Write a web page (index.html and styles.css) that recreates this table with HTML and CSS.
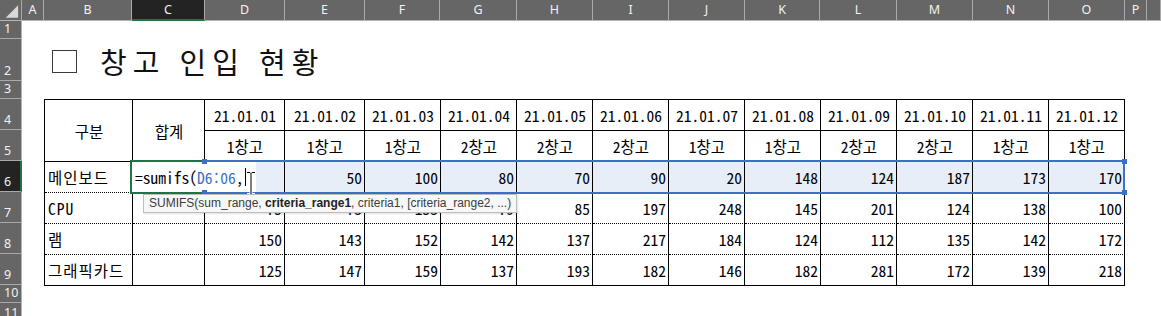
FILE: index.html
```html
<!DOCTYPE html>
<html lang="ko">
<head>
<meta charset="utf-8">
<link rel="stylesheet" href="styles.css">
</head>
<body>
<div class="sheet">
  <div class="colhead">
    <div class="corner"><svg width="22" height="20" viewBox="0 0 22 20"><polygon points="19,5 19,18 6,18" fill="#d8d8d8"/></svg></div>
    <div>A</div><div>B</div><div class="sel">C</div><div>D</div><div>E</div><div>F</div><div>G</div><div>H</div><div>I</div><div>J</div><div>K</div><div>L</div><div>M</div><div>N</div><div>O</div><div>P</div><div></div>
  </div>
  <div class="body">
    <div class="rowhead">
      <div class="rh h18">1</div>
      <div class="rh h42">2</div>
      <div class="rh h18">3</div>
      <div class="rh h31">4</div>
      <div class="rh h31">5</div>
      <div class="rh h31 sel">6</div>
      <div class="rh h31">7</div>
      <div class="rh h31">8</div>
      <div class="rh h31">9</div>
      <div class="rh h18">10</div>
      <div class="rh rest">11</div>
    </div>
    <div class="content">
      <div class="title"><span class="box"></span><span class="title-text">창고 인입 현황</span></div>
      <div class="table">
        <div class="c ctr span2">구분</div>
        <div class="c ctr span2">합계</div>
        <div class="c ctr">21.01.01</div><div class="c ctr">21.01.02</div><div class="c ctr">21.01.03</div><div class="c ctr">21.01.04</div><div class="c ctr">21.01.05</div><div class="c ctr">21.01.06</div><div class="c ctr">21.01.07</div><div class="c ctr">21.01.08</div><div class="c ctr">21.01.09</div><div class="c ctr">21.01.10</div><div class="c ctr">21.01.11</div><div class="c ctr">21.01.12</div>
        <div class="c ctr">1창고</div><div class="c ctr">1창고</div><div class="c ctr">1창고</div><div class="c ctr">2창고</div><div class="c ctr">2창고</div><div class="c ctr">2창고</div><div class="c ctr">1창고</div><div class="c ctr">1창고</div><div class="c ctr">2창고</div><div class="c ctr">2창고</div><div class="c ctr">1창고</div><div class="c ctr">1창고</div>

        <div class="c lbl dot">메인보드</div><div class="c dot"></div>
        <div class="c num dot hl"></div><div class="c num dot hl">50</div><div class="c num dot hl">100</div><div class="c num dot hl">80</div><div class="c num dot hl">70</div><div class="c num dot hl">90</div><div class="c num dot hl">20</div><div class="c num dot hl">148</div><div class="c num dot hl">124</div><div class="c num dot hl">187</div><div class="c num dot hl">173</div><div class="c num dot hl">170</div>

        <div class="c lbl dot">CPU</div><div class="c dot"></div>
        <div class="c num dot">75</div><div class="c num dot">73</div><div class="c num dot">153</div><div class="c num dot">79</div><div class="c num dot">85</div><div class="c num dot">197</div><div class="c num dot">248</div><div class="c num dot">145</div><div class="c num dot">201</div><div class="c num dot">124</div><div class="c num dot">138</div><div class="c num dot">100</div>

        <div class="c lbl dot">램</div><div class="c dot"></div>
        <div class="c num dot">150</div><div class="c num dot">143</div><div class="c num dot">152</div><div class="c num dot">142</div><div class="c num dot">137</div><div class="c num dot">217</div><div class="c num dot">184</div><div class="c num dot">124</div><div class="c num dot">112</div><div class="c num dot">135</div><div class="c num dot">142</div><div class="c num dot">172</div>

        <div class="c lbl">그래픽카드</div><div class="c"></div>
        <div class="c num">125</div><div class="c num">147</div><div class="c num">159</div><div class="c num">137</div><div class="c num">193</div><div class="c num">182</div><div class="c num">146</div><div class="c num">182</div><div class="c num">281</div><div class="c num">172</div><div class="c num">139</div><div class="c num">218</div>

        <div class="range"></div>
        <div class="active"></div>
        <div class="editor">=sumifs(<span class="ref">D6:06</span>,<span class="caret"></span></div>
        <span class="handle h-tl"></span><span class="handle h-bl"></span><span class="handle h-tr"></span><span class="handle h-br"></span>
        <svg class="ibeam" width="12" height="25" viewBox="0 0 12 25">
          <path d="M2 1.5h3l1 1 1-1h3M6 2.5v20M2 23.5h3l1-1 1 1h3" stroke="#fff" stroke-width="3" fill="none"/>
          <path d="M2 1.5h3l1 1 1-1h3M6 2.5v20M2 23.5h3l1-1 1 1h3" stroke="#000" stroke-width="1" fill="none"/>
        </svg>
        <div class="tip">SUMIFS(sum_range, <b>criteria_range1</b>, criteria1, [criteria_range2, ...)</div>
      </div>
    </div>
  </div>
</div>
</body>
</html>
```

FILE: styles.css
```css
html, body {
  margin: 0;
  padding: 0;
  background: #fff;
}
body {
  width: 1161px;
  height: 316px;
  overflow: hidden;
}
.sheet {
  width: 1161px;
  height: 316px;
  display: flex;
  flex-direction: column;
}
.colhead {
  display: grid;
  grid-template-columns: 22px 22px 88px 73px 80px 80px 75px 77px 76px 76px 76px 75px 77px 76px 76px 76px 22px 14px;
  height: 21px;
  flex: none;
}
.colhead > div {
  box-sizing: border-box;
  background: #666;
  border-right: 1px solid #a9a9a9;
  border-bottom: 1px solid #b4b4b4;
  color: #f2f2f2;
  font-family: "Noto Sans", "Open Sans", sans-serif;
  font-size: 12.5px;
  display: flex;
  align-items: center;
  justify-content: center;
  padding-bottom: 1px;
}
.colhead > .corner {
  padding: 0;
  align-items: flex-start;
  justify-content: flex-start;
}
.colhead > .sel {
  background: #232323;
  border-bottom: 2px solid #217346;
}
.body {
  display: flex;
  flex: 1;
}
.rowhead {
  width: 22px;
  flex: none;
  display: flex;
  flex-direction: column;
}
.rh {
  box-sizing: border-box;
  background: #666;
  border-bottom: 1px solid #a9a9a9;
  border-right: 1px solid #b4b4b4;
  color: #f2f2f2;
  font-family: "Noto Sans", "Open Sans", sans-serif;
  font-size: 12.5px;
  line-height: 16px;
  display: flex;
  align-items: flex-end;
  padding-left: 4px;
  padding-bottom: 1px;
}
.h18 { height: 18px; }
.h42 { height: 42px; }
.h31 { height: 31px; }
.rest { flex: 1; padding-bottom: 0; align-items: flex-start; padding-top: 2px; }
.rh.sel {
  background: #232323;
  border-right: 2px solid #217346;
}
.content {
  flex: 1;
  padding-left: 22px;
  padding-top: 18px;
}
.title {
  height: 42px;
  display: flex;
  align-items: flex-end;
  padding-left: 8px;
  box-sizing: border-box;
  padding-bottom: 3px;
}
.box {
  width: 25px;
  height: 23px;
  box-sizing: border-box;
  border: 1px solid #3a3a3a;
  margin-bottom: 5px;
}
.title-text {
  margin-left: 23px;
  font-family: "Noto Sans CJK KR", sans-serif;
  font-size: 29px;
  letter-spacing: 6px;
  line-height: 34px;
  color: #111;
}
.table {
  position: relative;
  margin-top: 18px;
  display: grid;
  grid-template-columns: 88px 72px 80px 80px 76px 76px 76px 76px 76px 76px 76px 76px 76px 76px;
  grid-template-rows: repeat(6, 31px);
  width: max-content;
  border-top: 1px solid #000;
  border-left: 1px solid #000;
  font-family: "Noto Sans Mono CJK KR", "Liberation Mono", "Noto Sans CJK KR", monospace;
  font-size: 15.5px;
  color: #000;
}
.c {
  box-sizing: border-box;
  border-right: 1px solid #000;
  border-bottom: 1px solid #000;
  display: flex;
  align-items: center;
  padding: 0 2px 0 3px;
  white-space: nowrap;
  overflow: hidden;
}
.ctr { justify-content: center; }
.num { justify-content: flex-end; }
.lbl { justify-content: flex-start; letter-spacing: 1px; }
.span2 { grid-row: span 2; }
.dot { border-bottom: 1px dotted #000; }
.hl { background: #e8eef8; }
.range {
  position: absolute;
  left: 159px;
  top: 60px;
  width: 921px;
  height: 34px;
  box-sizing: border-box;
  border: 2px solid #3b70c6;
  border-left: none;
}
.active {
  position: absolute;
  left: 85px;
  top: 60px;
  width: 74px;
  height: 34px;
  box-sizing: border-box;
  border: 2px solid #217346;
  border-right: none;
}
.editor {
  position: absolute;
  left: 87px;
  top: 62px;
  width: 124px;
  height: 30px;
  background: #fff;
  display: flex;
  align-items: center;
  padding-left: 3px;
  box-sizing: border-box;
  white-space: nowrap;
}
.ref { color: #3b6fc7; }
.caret {
  display: inline-block;
  width: 1px;
  height: 18px;
  background: #000;
  margin-left: 1px;
}
.handle {
  position: absolute;
  width: 5px;
  height: 5px;
  background: #3b70c6;
}
.h-tl { left: 157px; top: 59px; }
.h-bl { left: 157px; top: 90px; }
.h-tr { left: 1077px; top: 59px; }
.h-br { left: 1077px; top: 90px; }
.ibeam {
  position: absolute;
  left: 200px;
  top: 71px;
}
.tip {
  position: absolute;
  left: 98px;
  top: 94px;
  height: 19px;
  box-sizing: border-box;
  padding: 0 5px;
  background: #f7f7f7;
  border: 1px solid #bdbdbd;
  box-shadow: 1px 1px 2px rgba(0, 0, 0, 0.12);
  font-family: "Liberation Sans", "Noto Sans", sans-serif;
  font-size: 12px;
  line-height: 17px;
  color: #3c3c3c;
  white-space: nowrap;
}
.tip b {
  color: #222;
}
```
